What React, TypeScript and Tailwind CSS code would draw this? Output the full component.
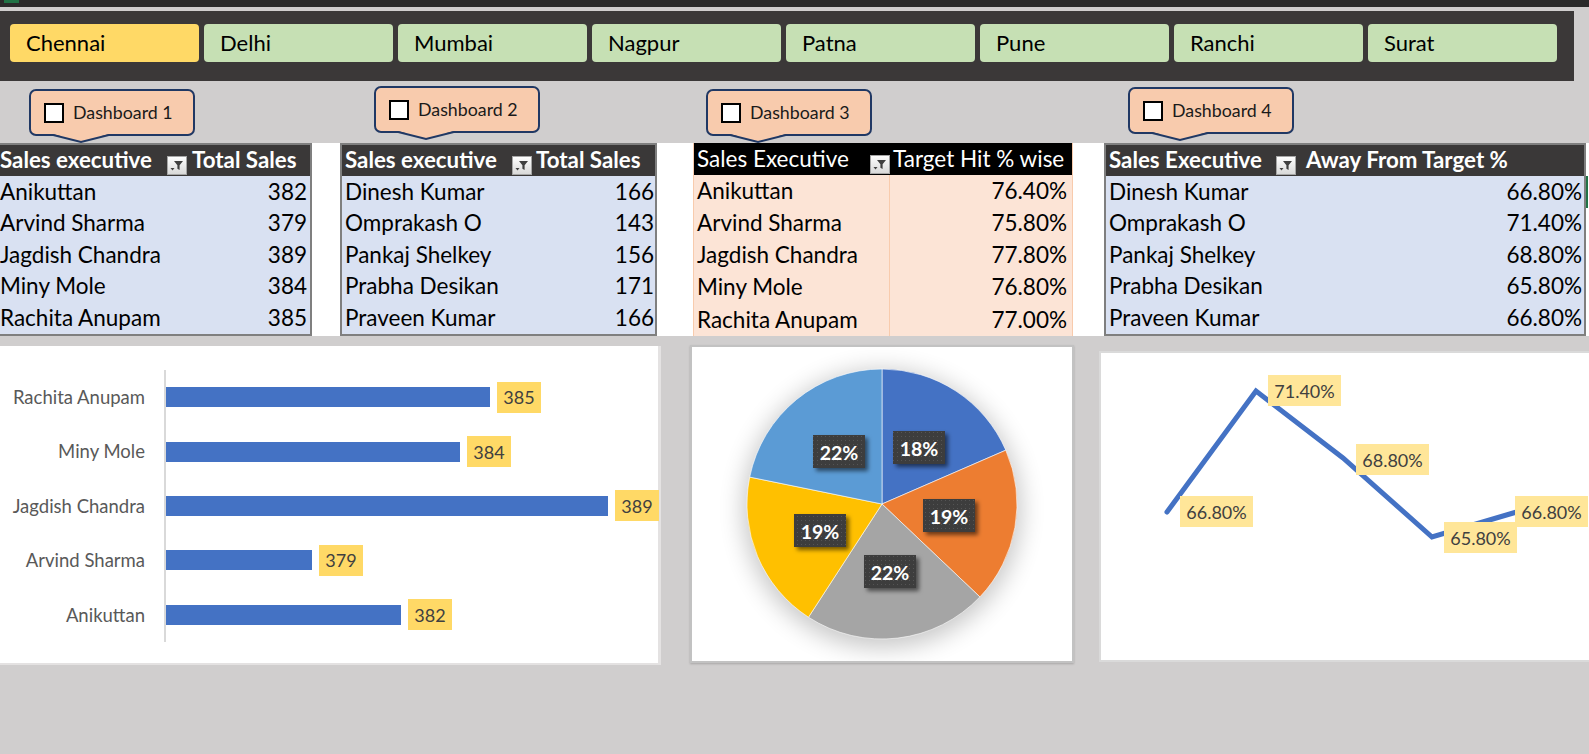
import React from 'react';

const cities = ['Chennai', 'Delhi', 'Mumbai', 'Nagpur', 'Patna', 'Pune', 'Ranchi', 'Surat'];

const t1: [string, string][] = [
  ['Anikuttan', '382'],
  ['Arvind Sharma', '379'],
  ['Jagdish Chandra', '389'],
  ['Miny Mole', '384'],
  ['Rachita Anupam', '385'],
];
const t2: [string, string][] = [
  ['Dinesh Kumar', '166'],
  ['Omprakash O', '143'],
  ['Pankaj Shelkey', '156'],
  ['Prabha Desikan', '171'],
  ['Praveen Kumar', '166'],
];
const t3: [string, string][] = [
  ['Anikuttan', '76.40%'],
  ['Arvind Sharma', '75.80%'],
  ['Jagdish Chandra', '77.80%'],
  ['Miny Mole', '76.80%'],
  ['Rachita Anupam', '77.00%'],
];
const t4: [string, string][] = [
  ['Dinesh Kumar', '66.80%'],
  ['Omprakash O', '71.40%'],
  ['Pankaj Shelkey', '68.80%'],
  ['Prabha Desikan', '65.80%'],
  ['Praveen Kumar', '66.80%'],
];

const bars = [
  { n: 'Rachita Anupam', v: 385, w: 'w-[324px]' },
  { n: 'Miny Mole', v: 384, w: 'w-[294px]' },
  { n: 'Jagdish Chandra', v: 389, w: 'w-[442px]' },
  { n: 'Arvind Sharma', v: 379, w: 'w-[146px]' },
  { n: 'Anikuttan', v: 382, w: 'w-[235px]' },
];

function FilterIcon() {
  return (
    <svg width="20" height="19" viewBox="0 0 20 19" className="shrink-0 self-end mb-[1px]">
      <defs>
        <linearGradient id="fgrad" x1="0" y1="0" x2="0" y2="1">
          <stop offset="0" stopColor="#ffffff" />
          <stop offset="1" stopColor="#d8d8d8" />
        </linearGradient>
      </defs>
      <rect x="0.5" y="0.5" width="19" height="18" fill="url(#fgrad)" stroke="#a6a6a6" />
      <path d="M7 5 H16 L12.6 9.2 V14 L10.4 12.8 V9.2 Z" fill="#404040" />
      <path d="M3.5 12 H7.5 L5.5 14.5 Z" fill="#404040" />
    </svg>
  );
}

function Callout({ label, className }: { label: string; className: string }) {
  return (
    <div
      className={`relative flex h-[47px] w-[166px] shrink-0 items-center rounded-[7px] border-2 border-[#203864] bg-[#f8cbad] pl-[13px] ${className}`}
    >
      <div className="h-[20px] w-[20px] shrink-0 border-2 border-black bg-white" />
      <span className="ml-[9px] whitespace-nowrap text-[17.8px] leading-none text-[#1a1a1a]">{label}</span>
      <svg className="absolute left-[22px] top-full" width="56" height="10" viewBox="0 0 56 10">
        <polygon points="0,0 56,0 28,7.5" fill="#f8cbad" />
        <polyline points="0,1 28,8 56,1" fill="none" stroke="#203864" strokeWidth="2" />
      </svg>
    </div>
  );
}

const cx = 190;
const cy = 157;
const r = 135;
const slices = [
  { a0: 0, a1: 66.5, c: '#4472c4' },
  { a0: 66.5, a1: 133.5, c: '#ed7d31' },
  { a0: 133.5, a1: 213, c: '#a5a5a5' },
  { a0: 213, a1: 281.5, c: '#ffc000' },
  { a0: 281.5, a1: 360, c: '#5b9bd5' },
];
function pt(a: number): [number, number] {
  const t = (a * Math.PI) / 180;
  return [cx + r * Math.sin(t), cy - r * Math.cos(t)];
}
const pieLabels = [
  { x: 201, y: 84, t: '18%' },
  { x: 231, y: 152, t: '19%' },
  { x: 172, y: 208, t: '22%' },
  { x: 102, y: 167, t: '19%' },
  { x: 121, y: 88, t: '22%' },
];

const linePts: [number, number][] = [
  [66, 159],
  [155, 38],
  [242, 105],
  [331, 184],
  [419, 158],
];
const lineLabels = [
  { x: 79, y: 143, t: '66.80%' },
  { x: 167, y: 22, t: '71.40%' },
  { x: 255, y: 91, t: '68.80%' },
  { x: 343, y: 169, t: '65.80%' },
  { x: 414, y: 143, t: '66.80%' },
];

export default function App() {
  return (
    <div className="h-[754px] w-[1589px] overflow-hidden bg-[#d0cece] font-['Lato',sans-serif] text-black">
      {/* top strip */}
      <div className="flex h-[7px] items-start bg-[#2b2b2b]">
        <div className="ml-[4px] h-[3px] w-[15px] bg-[#217346]" />
      </div>
      <div className="h-[4px]" />

      {/* slicer */}
      <div className="flex h-[70px] w-[1574px] gap-[5px] bg-[#3b3838] pl-[10px] pt-[13px]">
        {cities.map((c, i) => (
          <div
            key={c}
            className={`flex h-[38px] w-[189px] shrink-0 items-center rounded-[4px] pl-[16px] text-[22px] leading-none text-black ${
              i === 0 ? 'bg-[#ffd966]' : 'bg-[#c6e0b4]'
            }`}
          >
            {c}
          </div>
        ))}
      </div>

      {/* callouts */}
      <div className="relative z-10 flex h-[62px] items-start">
        <Callout label="Dashboard 1" className="ml-[29px] mt-[8px]" />
        <Callout label="Dashboard 2" className="ml-[179px] mt-[5px]" />
        <Callout label="Dashboard 3" className="ml-[166px] mt-[8px]" />
        <Callout label="Dashboard 4" className="ml-[256px] mt-[6px]" />
      </div>

      {/* tables */}
      <div className="flex h-[193px] items-start bg-white">
        {/* T1 */}
        <div className="w-[312px] shrink-0 border-2 border-l-0 border-[#7f7f7f] bg-[#d9e1f2]">
          <div className="flex h-[31px] items-center bg-[#3a3838] text-[22.3px] font-bold leading-none text-white">
            <div className="w-[167px] shrink-0 whitespace-nowrap">Sales executive</div>
            <FilterIcon />
            <div className="ml-[5px] whitespace-nowrap">Total Sales</div>
          </div>
          {t1.map(([n, v]) => (
            <div key={n} className="flex h-[31.5px] items-center justify-between pr-[3px] text-[22.5px] leading-none">
              <span>{n}</span>
              <span>{v}</span>
            </div>
          ))}
        </div>

        {/* T2 */}
        <div className="ml-[28px] w-[317px] shrink-0 border-2 border-[#7f7f7f] bg-[#d9e1f2]">
          <div className="flex h-[31px] items-center bg-[#3a3838] text-[22.3px] font-bold leading-none text-white">
            <div className="w-[170px] shrink-0 whitespace-nowrap pl-[3px]">Sales executive</div>
            <FilterIcon />
            <div className="ml-[4px] whitespace-nowrap">Total Sales</div>
          </div>
          {t2.map(([n, v]) => (
            <div key={n} className="flex h-[31.5px] items-center justify-between pl-[3px] pr-[1px] text-[22.5px] leading-none">
              <span>{n}</span>
              <span>{v}</span>
            </div>
          ))}
        </div>

        {/* T3 */}
        <div className="ml-[36px] w-[380px] shrink-0 border-x border-[#f8cbad] bg-[#fce4d6]">
          <div className="flex h-[32px] items-center bg-black text-[22.5px] leading-none text-white">
            <div className="w-[176px] shrink-0 whitespace-nowrap pl-[3px]">Sales Executive</div>
            <FilterIcon />
            <div className="ml-[3px] whitespace-nowrap">Target Hit % wise</div>
          </div>
          {t3.map(([n, v]) => (
            <div key={n} className="flex h-[32.2px] text-[22.5px] leading-none">
              <div className="flex w-[196px] shrink-0 items-center border-r border-[#f8cbad] pl-[3px]">{n}</div>
              <div className="flex flex-1 items-center justify-end pr-[5px]">{v}</div>
            </div>
          ))}
        </div>

        {/* T4 */}
        <div className="ml-[31px] w-[482px] shrink-0 border-2 border-[#7f7f7f] bg-[#d9e1f2]">
          <div className="flex h-[31px] items-center bg-[#3a3838] text-[22.3px] font-bold leading-none text-white">
            <div className="w-[170px] shrink-0 whitespace-nowrap pl-[3px]">Sales Executive</div>
            <FilterIcon />
            <div className="ml-[10px] whitespace-nowrap">Away From Target %</div>
          </div>
          {t4.map(([n, v]) => (
            <div key={n} className="flex h-[31.5px] items-center justify-between pl-[3px] pr-[2px] text-[22.5px] leading-none">
              <span>{n}</span>
              <span>{v}</span>
            </div>
          ))}
        </div>
        <div className="mt-[33px] h-[32px] w-[2px] shrink-0 bg-[#217346]" />
      </div>

      {/* charts */}
      <div className="flex items-start">
        {/* bar chart */}
        <div className="mt-[10px] flex h-[319px] w-[661px] shrink-0 border-b-2 border-r-[3px] border-[#e4e2e2] bg-white pt-[24px]">
          <div className="w-[164px] shrink-0">
            {bars.map((b) => (
              <div key={b.n} className="flex h-[54.4px] items-center justify-end whitespace-nowrap pr-[19px] text-[18.5px] leading-none text-[#595959]">
                {b.n}
              </div>
            ))}
          </div>
          <div className="h-[272px] w-[2px] shrink-0 bg-[#d9d9d9]" />
          <div className="flex-1">
            {bars.map((b) => (
              <div key={b.n} className="flex h-[54.4px] items-center">
                <div className={`h-[20px] ${b.w} bg-[#4472c4]`} />
                <div className="ml-[7px] flex h-[31px] w-[44px] items-center justify-center bg-[#ffd966] text-[18px] leading-none text-[#404040]">
                  {b.v}
                </div>
              </div>
            ))}
          </div>
        </div>

        {/* pie chart */}
        <div className="ml-[29px] mt-[9px] h-[318px] w-[384px] shrink-0 border-2 border-[#c2c2c2] bg-white shadow-[0_1px_2px_rgba(0,0,0,0.2)]">
          <svg width="380" height="314" viewBox="0 0 380 314">
            <defs>
              <filter id="pieShadow" x="-50%" y="-50%" width="200%" height="200%">
                <feGaussianBlur stdDeviation="12" />
              </filter>
              <filter id="lblShadow" x="-30%" y="-30%" width="160%" height="160%">
                <feDropShadow dx="3" dy="3" stdDeviation="2" floodColor="#000" floodOpacity="0.55" />
              </filter>
              <pattern id="dots" width="4" height="4" patternUnits="userSpaceOnUse">
                <rect width="4" height="4" fill="#3c3c3c" />
                <rect x="1" y="1" width="1" height="1" fill="#545454" />
              </pattern>
            </defs>
            <circle cx={cx} cy={cy + 5} r={r + 4} fill="#000" opacity="0.22" filter="url(#pieShadow)" />
            {slices.map((s, i) => {
              const [x0, y0] = pt(s.a0);
              const [x1, y1] = pt(s.a1);
              const large = s.a1 - s.a0 > 180 ? 1 : 0;
              return (
                <path
                  key={i}
                  d={`M${cx},${cy} L${x0},${y0} A${r},${r} 0 ${large} 1 ${x1},${y1} Z`}
                  fill={s.c}
                  stroke="#ffffff"
                  strokeWidth="0.6"
                />
              );
            })}
            {pieLabels.map((l, i) => (
              <g key={i}>
                <rect x={l.x} y={l.y} width="52" height="33" fill="url(#dots)" filter="url(#lblShadow)" />
                <text
                  x={l.x + 26}
                  y={l.y + 17.5}
                  textAnchor="middle"
                  dominantBaseline="central"
                  fill="#ffffff"
                  fontFamily="Lato, sans-serif"
                  fontWeight="700"
                  fontSize="19.5"
                >
                  {l.t}
                </text>
              </g>
            ))}
          </svg>
        </div>

        {/* line chart */}
        <div className="ml-[25px] mt-[15px] h-[311px] w-[490px] shrink-0 border-2 border-r-0 border-[#dadada] bg-white">
          <svg width="488" height="307" viewBox="0 0 488 307">
            <polyline
              points={linePts.map((p) => p.join(',')).join(' ')}
              fill="none"
              stroke="#4472c4"
              strokeWidth="5"
              strokeLinecap="round"
              strokeLinejoin="miter"
            />
            {lineLabels.map((l, i) => (
              <g key={i}>
                <rect x={l.x} y={l.y} width="73" height="31" fill="#ffe699" />
                <text
                  x={l.x + 36.5}
                  y={l.y + 16}
                  textAnchor="middle"
                  dominantBaseline="central"
                  fill="#404040"
                  fontFamily="Lato, sans-serif"
                  fontSize="18"
                >
                  {l.t}
                </text>
              </g>
            ))}
          </svg>
        </div>
      </div>
    </div>
  );
}
